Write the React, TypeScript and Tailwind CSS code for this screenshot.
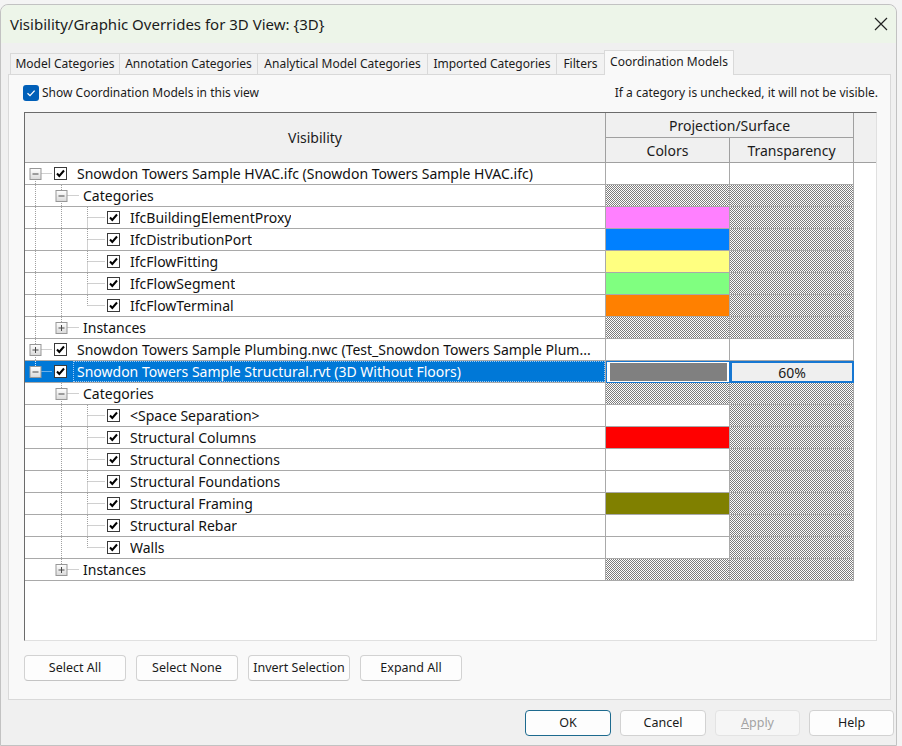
import React from 'react'

type Row = {
  lvl: 0 | 1 | 2
  text: string
  exp?: '+' | '-'
  cb?: boolean
  rails: boolean[]
  up: boolean
  down: boolean
  color: string
  trans: 'white' | 'hatch' | 'value'
  selected?: boolean
}

const HVAC = 'Snowdon Towers Sample HVAC.ifc (Snowdon Towers Sample HVAC.ifc)'

const rows: Row[] = [
  { lvl: 0, exp: '-', cb: true, text: HVAC, rails: [], up: false, down: true, color: 'white', trans: 'white' },
  { lvl: 1, exp: '-', text: 'Categories', rails: [true], up: true, down: true, color: 'hatch', trans: 'hatch' },
  { lvl: 2, cb: true, text: 'IfcBuildingElementProxy', rails: [true, true], up: true, down: true, color: '#ff80ff', trans: 'hatch' },
  { lvl: 2, cb: true, text: 'IfcDistributionPort', rails: [true, true], up: true, down: true, color: '#0080ff', trans: 'hatch' },
  { lvl: 2, cb: true, text: 'IfcFlowFitting', rails: [true, true], up: true, down: true, color: '#ffff80', trans: 'hatch' },
  { lvl: 2, cb: true, text: 'IfcFlowSegment', rails: [true, true], up: true, down: true, color: '#80ff80', trans: 'hatch' },
  { lvl: 2, cb: true, text: 'IfcFlowTerminal', rails: [true, true], up: true, down: false, color: '#ff8000', trans: 'hatch' },
  { lvl: 1, exp: '+', text: 'Instances', rails: [true], up: true, down: false, color: 'hatch', trans: 'hatch' },
  {
    lvl: 0,
    exp: '+',
    cb: true,
    text: 'Snowdon Towers Sample Plumbing.nwc (Test_Snowdon Towers Sample Plum...',
    rails: [],
    up: true,
    down: true,
    color: 'white',
    trans: 'white',
  },
  {
    lvl: 0,
    exp: '-',
    cb: true,
    text: 'Snowdon Towers Sample Structural.rvt (3D Without Floors)',
    rails: [],
    up: true,
    down: false,
    color: '#808080',
    trans: 'value',
    selected: true,
  },
  { lvl: 1, exp: '-', text: 'Categories', rails: [false], up: true, down: true, color: 'hatch', trans: 'hatch' },
  { lvl: 2, cb: true, text: '<Space Separation>', rails: [false, true], up: true, down: true, color: 'white', trans: 'hatch' },
  { lvl: 2, cb: true, text: 'Structural Columns', rails: [false, true], up: true, down: true, color: '#ff0000', trans: 'hatch' },
  { lvl: 2, cb: true, text: 'Structural Connections', rails: [false, true], up: true, down: true, color: 'white', trans: 'hatch' },
  { lvl: 2, cb: true, text: 'Structural Foundations', rails: [false, true], up: true, down: true, color: 'white', trans: 'hatch' },
  { lvl: 2, cb: true, text: 'Structural Framing', rails: [false, true], up: true, down: true, color: '#808000', trans: 'hatch' },
  { lvl: 2, cb: true, text: 'Structural Rebar', rails: [false, true], up: true, down: true, color: 'white', trans: 'hatch' },
  { lvl: 2, cb: true, text: 'Walls', rails: [false, true], up: true, down: false, color: 'white', trans: 'hatch' },
  { lvl: 1, exp: '+', text: 'Instances', rails: [false], up: true, down: false, color: 'hatch', trans: 'hatch' },
]

const HATCH =
  '[background-image:repeating-conic-gradient(#7d7d7d_0_25%,#ffffff_0_50%)] [background-size:2px_2px]'

function Guide({ row, id }: { row: Row; id: number }) {
  const w = row.lvl === 0 ? 29 : row.lvl === 1 ? 58 : 82
  const col = 10.5 + 26 * row.lvl
  const box = !!row.exp
  const stroke = row.selected ? '#d6e8fa' : '#a0a0a0'
  const line = { stroke, strokeWidth: 1, strokeDasharray: '1 1' }
  return (
    <svg width={w} height={21} className="shrink-0">
      <defs>
        <linearGradient id={`eb${id}`} x1="0" y1="0" x2="0" y2="1">
          <stop offset="0" stopColor="#ffffff" />
          <stop offset="1" stopColor="#d9d9d9" />
        </linearGradient>
      </defs>
      {row.rails.map((on, i) =>
        on ? <line key={i} x1={10.5 + 26 * i} y1={0} x2={10.5 + 26 * i} y2={21} {...line} /> : null,
      )}
      {row.up && <line x1={col} y1={0} x2={col} y2={box ? 5 : 10.5} {...line} />}
      {row.down && <line x1={col} y1={box ? 16 : 10.5} x2={col} y2={21} {...line} />}
      <line x1={box ? col + 6 : col} y1={10.5} x2={row.lvl === 1 ? w - 4 : w - 2} y2={10.5} {...line} />
      {box && (
        <g>
          <rect x={col - 5.5} y={5.5} width={11} height={11} fill={`url(#eb${id})`} stroke="#979797" />
          <line x1={col - 3} y1={11} x2={col + 3} y2={11} stroke="#4a4a4a" />
          {row.exp === '+' && <line x1={col} y1={8} x2={col} y2={14} stroke="#4a4a4a" />}
        </g>
      )}
    </svg>
  )
}

function ClassicCheck() {
  return (
    <svg width={13} height={13} className="shrink-0">
      <rect x={0.5} y={0.5} width={12} height={12} fill="#ffffff" stroke="#3a3a3a" />
      <path d="M3 6.5 L5.3 9 L10 3.5" fill="none" stroke="#000000" strokeWidth={2} />
    </svg>
  )
}

function ColorCell({ row }: { row: Row }) {
  if (row.selected) {
    return (
      <div className="w-[124px] shrink-0 border border-[#1677d2] bg-white py-[1px] pl-[3px] pr-[2px]">
        <div className="h-full bg-[#808080]" />
      </div>
    )
  }
  if (row.color === 'hatch') {
    return <div className={`w-[124px] shrink-0 border-b border-r border-[#a9a9a9] ${HATCH}`} />
  }
  return (
    <div
      className="w-[124px] shrink-0 border-b border-r border-[#a9a9a9]"
      style={{ backgroundColor: row.color === 'white' ? '#ffffff' : row.color }}
    />
  )
}

function TransCell({ row }: { row: Row }) {
  if (row.trans === 'value') {
    return (
      <div className="flex w-[124px] shrink-0 items-center justify-center border-2 border-[#1677d2] bg-[#efefef] text-[14px] text-[#1a1a1a]">
        60%
      </div>
    )
  }
  if (row.trans === 'hatch') {
    return <div className={`w-[124px] shrink-0 border-b border-r border-[#a9a9a9] ${HATCH}`} />
  }
  return <div className="w-[124px] shrink-0 border-b border-r border-[#a9a9a9] bg-white" />
}

function TreeRow({ row, id }: { row: Row; id: number }) {
  return (
    <div className="flex h-[22px]">
      <div
        className={`flex w-[581px] shrink-0 items-center border-b border-r border-[#a9a9a9] ${
          row.selected ? 'bg-[#0078d7] text-white' : 'bg-white text-[#111]'
        }`}
      >
        <Guide row={row} id={id} />
        {row.cb && <ClassicCheck />}
        {row.selected ? (
          <span className="ml-[6px] flex min-w-0 flex-1 items-center self-stretch truncate border border-dotted border-[#9fcaf4] pl-[3px]">
            {row.text}
          </span>
        ) : (
          <span className={`${row.cb ? 'ml-[10px]' : ''} min-w-0 truncate`}>{row.text}</span>
        )}
      </div>
      <ColorCell row={row} />
      <TransCell row={row} />
    </div>
  )
}

function Btn({ children, w = 'w-[102px]' }: { children: React.ReactNode; w?: string }) {
  return (
    <button
      className={`${w} h-[26px] rounded-[4px] border border-[#d2d2d2] border-b-[#c4c4c4] bg-[#fdfdfd] text-[12.5px] text-[#1a1a1a]`}
    >
      {children}
    </button>
  )
}

export default function App() {
  const tabs = [
    { label: 'Model Categories', w: 'w-[110px]' },
    { label: 'Annotation Categories', w: 'w-[139px]' },
    { label: 'Analytical Model Categories', w: 'w-[171px]' },
    { label: 'Imported Categories', w: 'w-[130px]' },
    { label: 'Filters', w: 'w-[49px]' },
  ]

  return (
    <div className="h-[746px] w-[902px] overflow-hidden bg-[#f4f4f4] pr-[5px] pt-[4px] font-['Noto_Sans',sans-serif] text-[#1a1a1a]">
      <div className="flex h-[742px] flex-col rounded-t-[8px] border border-[#c2c2c2] bg-[#f0f0f0]">
        {/* title bar */}
        <div className="flex h-[38px] shrink-0 items-center justify-between rounded-t-[8px] bg-[#edf5e9] pl-[9px] pr-[8px]">
          <span className="text-[15px] text-[#1b1b1b]">Visibility/Graphic Overrides for 3D View: {'{3D}'}</span>
          <svg width={14} height={14} viewBox="0 0 14 14">
            <path d="M1 1 L13 13 M13 1 L1 13" stroke="#222" strokeWidth={1.2} />
          </svg>
        </div>

        {/* tabs */}
        <div className="mt-[7px] flex h-[24px] shrink-0 items-end pl-[9px] text-[12px] text-[#1b1b1b]">
          {tabs.map((t) => (
            <div
              key={t.label}
              className={`${t.w} -mr-px flex h-[21px] items-center justify-center border border-b-0 border-[#d9d9d9] bg-[#f2f2f2]`}
            >
              {t.label}
            </div>
          ))}
          <div className="relative z-10 -mb-px flex h-[25px] w-[130px] items-start justify-center border border-b-0 border-[#d9d9d9] bg-[#f9f9f9] pt-[2px]">
            Coordination Models
          </div>
        </div>

        {/* panel */}
        <div className="ml-[7px] flex h-[626px] w-[883px] shrink-0 flex-col border border-[#d9d9d9] bg-[#f9f9f9]">
          <div className="mt-[10px] flex h-[16px] items-center justify-between pl-[14px] pr-[12px] text-[12px] text-[#1b1b1b]">
            <div className="flex items-center">
              <span className="flex h-[16px] w-[16px] items-center justify-center rounded-[3px] bg-[#005fb8]">
                <svg width={10} height={10} viewBox="0 0 10 10">
                  <path d="M1.5 5.2 L4 7.6 L8.6 2.6" fill="none" stroke="#fff" strokeWidth={1.3} />
                </svg>
              </span>
              <span className="ml-[3px]">Show Coordination Models in this view</span>
            </div>
            <span>If a category is unchecked, it will not be visible.</span>
          </div>

          {/* grid */}
          <div className="ml-[15px] mt-[11px] flex h-[529px] w-[853px] flex-col border border-b-[#e0e0e0] border-l-[#6b6b6b] border-r-[#e0e0e0] border-t-[#6b6b6b] bg-white text-[14px]">
            <div className="flex h-[50px] shrink-0 bg-[#f0f0f0] text-[#1b1b1b]">
              <div className="flex w-[581px] shrink-0 items-center justify-center border-b border-r border-[#a0a0a0]">
                Visibility
              </div>
              <div className="flex w-[248px] shrink-0 flex-col">
                <div className="flex h-[25px] items-center justify-center border-b border-r border-[#a0a0a0]">
                  Projection/Surface
                </div>
                <div className="flex h-[25px]">
                  <div className="flex w-[124px] items-center justify-center border-b border-r border-[#a0a0a0]">
                    Colors
                  </div>
                  <div className="flex w-[124px] items-center justify-center border-b border-r border-[#a0a0a0]">
                    Transparency
                  </div>
                </div>
              </div>
              <div className="flex-1 border-b border-[#a0a0a0]" />
            </div>
            {rows.map((r, i) => (
              <TreeRow key={i} row={r} id={i} />
            ))}
          </div>

          <div className="ml-[15px] mt-[14px] flex gap-[10px]">
            <Btn>Select All</Btn>
            <Btn>Select None</Btn>
            <Btn>Invert Selection</Btn>
            <Btn>Expand All</Btn>
          </div>
        </div>

        {/* dialog buttons */}
        <div className="mt-[10px] flex justify-end gap-[9px] pr-[2px] text-[12.5px]">
          <button className="h-[26px] w-[86px] rounded-[4px] border-[1.5px] border-[#1d6a8e] bg-[#fdfdfd] text-[#1a1a1a]">
            OK
          </button>
          <button className="h-[26px] w-[86px] rounded-[4px] border border-[#d2d2d2] bg-[#fdfdfd] text-[#1a1a1a]">
            Cancel
          </button>
          <button className="h-[26px] w-[85px] rounded-[4px] border border-[#e3e3e3] bg-[#f6f6f6] text-[#a3a3a3]">
            <span className="underline">A</span>pply
          </button>
          <button className="h-[26px] w-[85px] rounded-[4px] border border-[#d2d2d2] bg-[#fdfdfd] text-[#1a1a1a]">
            Help
          </button>
        </div>
      </div>
    </div>
  )
}
